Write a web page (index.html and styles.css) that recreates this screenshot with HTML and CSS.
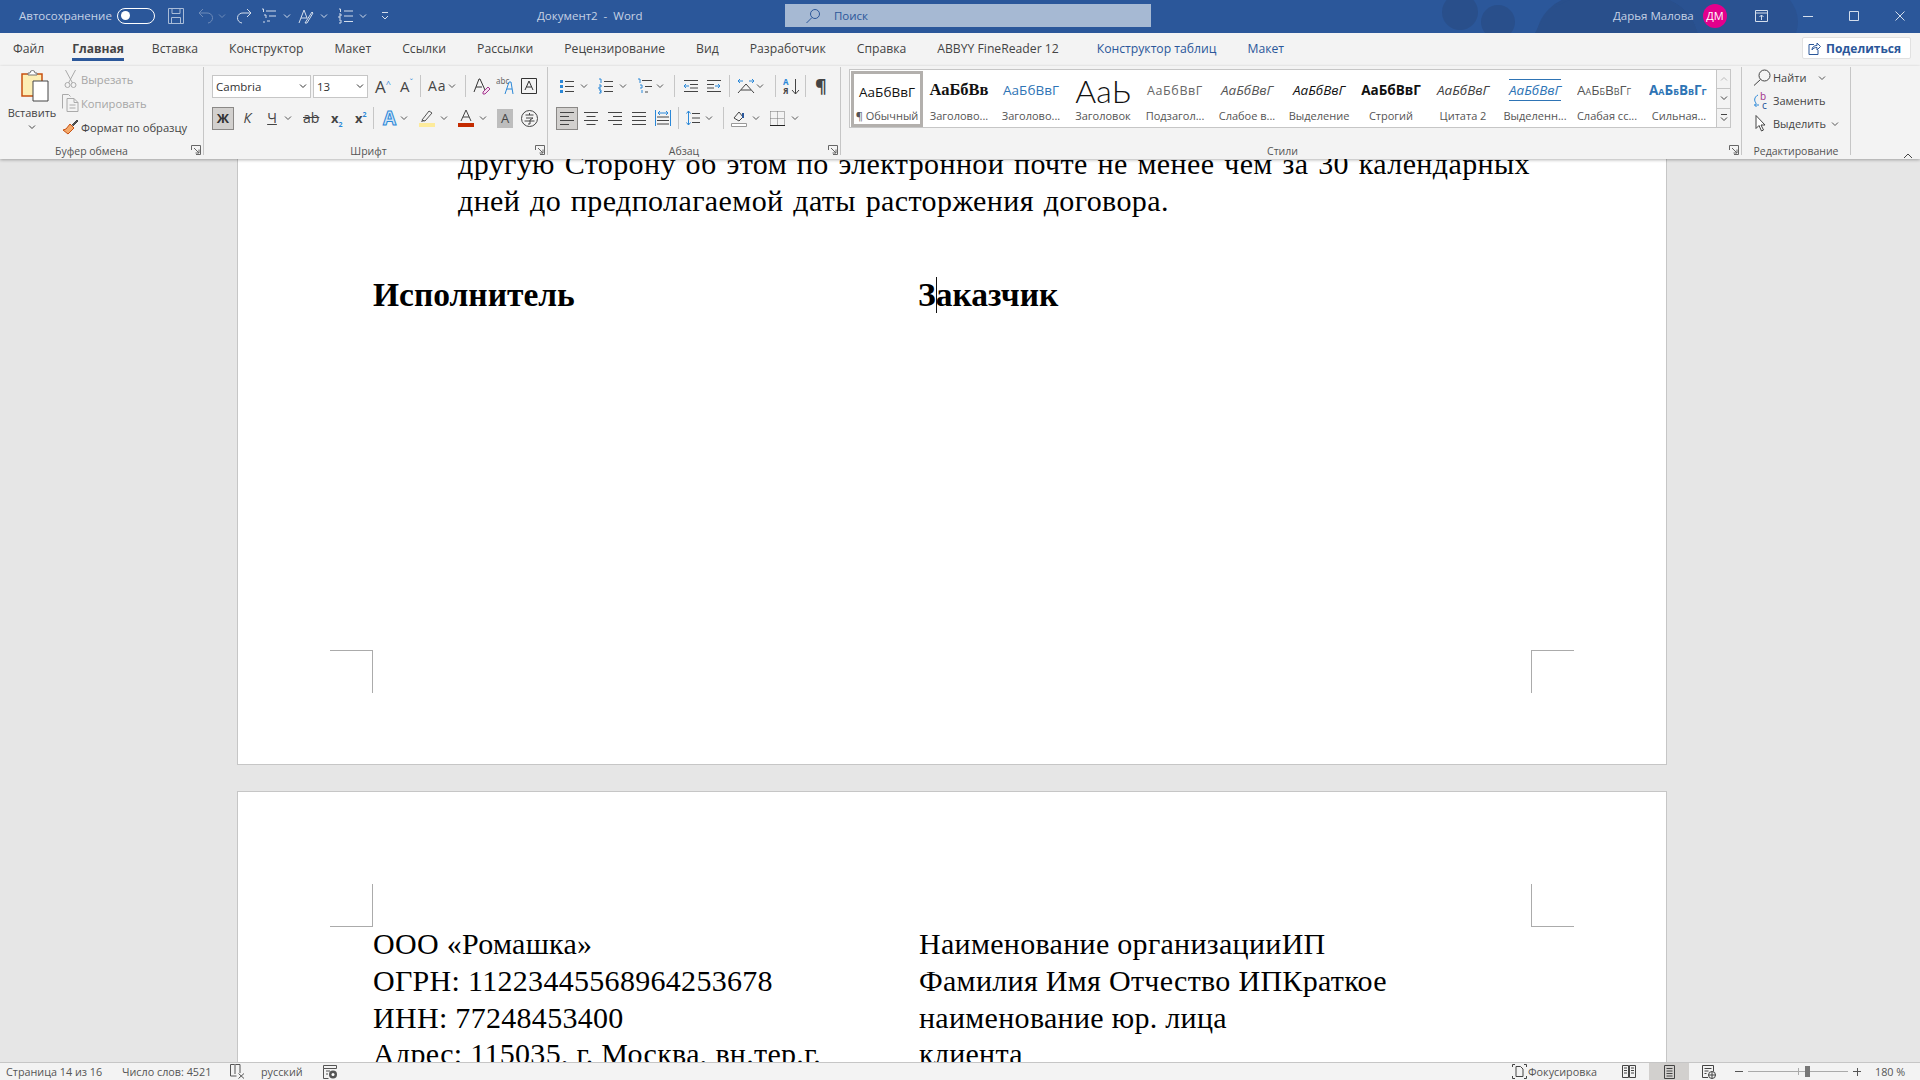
FILE: index.html
```html
<!DOCTYPE html>
<html lang="ru">
<head>
    <meta charset="UTF-8">
    <title>Документ2 - Word</title>
    <link rel="stylesheet" href="styles.css">
</head>
<body>
<svg class="sprite" width="0" height="0">
    <symbol id="chev" viewBox="0 0 8 8"><path d="M1 2.500l3 3 3-3" fill="none" stroke="currentColor"/></symbol>
    <symbol id="launch" viewBox="0 0 10 10"><path d="M.5 5V.5h9v9H5M3 3l5 5M8 4.500V8H4.500" fill="none" stroke="#666"/></symbol>
    <symbol id="bullets" viewBox="0 0 16 16"><path d="M1 2h3v3H1zM1 7h3v3H1zM1 12h3v3H1z" fill="#2b88d8"/><path d="M6 3.500h9M6 8.500h9M6 13.500h9" stroke="#444"/></symbol>
    <symbol id="numbers" viewBox="0 0 16 16"><path d="M1 1h2v4M1 7h2v2H1v2h2M1 12h2v3H1M2 13.500h1" fill="none" stroke="#2b88d8"/><path d="M6 3.500h9M6 8.500h9M6 13.500h9" stroke="#444"/></symbol>
    <symbol id="multi" viewBox="0 0 16 16"><path d="M1 1h2v4M3 7h2v3H3M5 12v3" fill="none" stroke="#2b88d8"/><path d="M5 2.500h10M8 8.500h7M8 14h3" stroke="#444"/></symbol>
    <symbol id="al-left" viewBox="0 0 16 16"><path d="M1 2.500h14M1 6.500h9M1 10.500h14M1 14.500h9" stroke="#444"/></symbol>
    <symbol id="al-center" viewBox="0 0 16 16"><path d="M1 2.500h14M3.500 6.500h9M1 10.500h14M3.500 14.500h9" stroke="#444"/></symbol>
    <symbol id="al-right" viewBox="0 0 16 16"><path d="M1 2.500h14M6 6.500h9M1 10.500h14M6 14.500h9" stroke="#444"/></symbol>
    <symbol id="al-just" viewBox="0 0 16 16"><path d="M1 2.500h14M1 6.500h14M1 10.500h14M1 14.500h14" stroke="#444"/></symbol>
</svg>

<!-- Title bar -->
<header class="titlebar">
    <svg class="title-pattern" width="400" height="33" viewBox="0 0 400 33"><g fill="#294f8b"><circle cx="30" cy="12" r="18"/><circle cx="68" cy="22" r="17"/><circle cx="150" cy="40" r="44"/><path d="M105 33Q118 6 140 0H240Q262 10 268 33z"/></g><path d="M240 0H360Q372 16 366 33H268Q262 10 240 0z" fill="#2a5291"/></svg>
    <div class="qat">
        <span class="qat-label">Автосохранение</span>
        <span class="toggle"><i></i></span>
        <svg class="qat-save" width="16" height="16" viewBox="0 0 16 16"><path d="M.5.500h15v15H.5zM4 .500v5h8v-5M3.500 15.500V9.500h9v6" fill="none" stroke="#a9bcd8"/></svg>
        <svg class="qat-undo" width="15" height="16" viewBox="0 0 15 16"><path d="M5 1L1 5l4 4M1 5h8a5 5 0 0 1 1 10" fill="none" stroke="#6f8cb9"/></svg>
        <svg class="qat-chev dim" width="8" height="8"><use href="#chev"/></svg>
        <svg class="qat-redo" width="15" height="16" viewBox="0 0 15 16"><path d="M10 1l4 4-4 4M14 5H6a5 5 0 0 0-1 10" fill="none" stroke="#d4deec"/></svg>
        <svg class="qat-list1" width="16" height="16" viewBox="0 0 16 16"><path d="M1 1h1.500v3M5 3h10M3 7h2v3M8 8h7M6 13h3M3 13v2" fill="none" stroke="#d4deec"/></svg>
        <svg class="qat-chev ch-1" width="8" height="8"><use href="#chev"/></svg>
        <svg class="qat-pen" width="16" height="16" viewBox="0 0 16 16"><path d="M1 15L6 2l3 8M3 10h6M7 15l7-11 1 1-6 10z" fill="none" stroke="#d4deec"/></svg>
        <svg class="qat-chev ch-1" width="8" height="8"><use href="#chev"/></svg>
        <svg class="qat-list2" width="16" height="16" viewBox="0 0 16 16"><path d="M1 1h1.500v3M1 6h2v2H1v2h2M1 12h2v3H1M6 3h9M6 8h9M6 13.500h9" fill="none" stroke="#d4deec"/></svg>
        <svg class="qat-chev" width="8" height="8"><use href="#chev"/></svg>
        <svg class="qat-custom" width="8" height="10" viewBox="0 0 8 10"><path d="M1 1.500h6M1 5l3 3 3-3" fill="none" stroke="#d4deec"/></svg>
    </div>
    <div class="doc-name">Документ2&nbsp; -&nbsp; Word</div>
    <div class="search">
        <svg width="16" height="16" viewBox="0 0 16 16"><circle cx="10" cy="6" r="4.500" fill="none" stroke="#2b579a"/><path d="M7 9.500L1.500 15" stroke="#2b579a"/></svg>
        <span>Поиск</span>
    </div>
    <div class="account">
        <span class="user-name">Дарья Малова</span>
        <span class="avatar">ДМ</span>
        <svg class="win-ribbon" width="13" height="12" viewBox="0 0 13 12"><path d="M.5.500h12v11H.5zM.5 3h12M6.500 10V5M4.500 7l2-2 2 2" fill="none" stroke="#d4deec"/></svg>
        <svg class="win-btn" width="12" height="12" viewBox="0 0 12 12"><path d="M1 6.500h10" stroke="#d4deec"/></svg>
        <svg class="win-btn" width="12" height="12" viewBox="0 0 12 12"><path d="M1.500 1.500h9v9h-9z" fill="none" stroke="#d4deec"/></svg>
        <svg class="win-btn" width="12" height="12" viewBox="0 0 12 12"><path d="M1.500 1.500l9 9M10.500 1.500l-9 9" stroke="#d4deec"/></svg>
    </div>
</header>

<!-- Tabs -->
<nav class="tabs">
    <span class="tab">Файл</span>
    <span class="tab active">Главная</span>
    <span class="tab">Вставка</span>
    <span class="tab">Конструктор</span>
    <span class="tab">Макет</span>
    <span class="tab">Ссылки</span>
    <span class="tab">Рассылки</span>
    <span class="tab">Рецензирование</span>
    <span class="tab">Вид</span>
    <span class="tab">Разработчик</span>
    <span class="tab">Справка</span>
    <span class="tab">ABBYY FineReader 12</span>
    <span class="tab context context-first">Конструктор таблиц</span>
    <span class="tab context">Макет</span>
    <button class="share">
        <svg width="13" height="13" viewBox="0 0 13 13"><path d="M6 2.500H1v10h9V8M4 8c0-3 2-4.500 5-4.500V1l3.500 3.500L9 8V5.500C7 5.500 5 6 4 8z" fill="none" stroke="#2b579a"/></svg>
        Поделиться
    </button>
</nav>

<!-- Ribbon -->
<section class="ribbon">
    <div class="group group-clip">
        <div class="clip-body">
            <div class="paste">
                <svg width="28" height="32" viewBox="0 0 28 32"><path d="M1 4h20v22H1z" fill="#fdeeb4" stroke="#c8500f" stroke-width="1.500"/><path d="M7 5V3h2a2.500 2.500 0 0 1 5 0h2v2z" fill="#fff" stroke="#777"/><path d="M12 11h15v20H12z" fill="#fff" stroke="#444"/></svg>
                <span>Вставить</span>
                <svg class="c-ic" width="8" height="8"><use href="#chev"/></svg>
            </div>
            <div class="clip-list">
                <div class="clip-item off"><svg width="14" height="20" viewBox="0 0 14 20"><path d="M2 1l7 13M12 1L5 14" stroke="#aaa" fill="none"/><circle cx="4" cy="16" r="2.500" fill="none" stroke="#aaa"/><circle cx="10" cy="16" r="2.500" fill="none" stroke="#aaa"/></svg>Вырезать</div>
                <div class="clip-item off"><svg width="17" height="18" viewBox="0 0 17 18"><path d="M.5 14.500V.5h6l2 2M5 4.500h7l4 4v9H5zM12 4.500v4h4M7.500 11h6M7.500 14h6" stroke="#aaa" fill="none"/></svg>Копировать</div>
                <div class="clip-item"><svg width="17" height="16" viewBox="0 0 17 16"><path d="M8 5l4 4-6 6-5-4 3-1z" fill="#f3a96b" stroke="#c8500f"/><path d="M10 6l5-5 1 1-5 5" fill="#555" stroke="#444"/></svg>Формат по образцу</div>
            </div>
        </div>
        <div class="group-label">Буфер обмена<svg class="launcher" width="10" height="10"><use href="#launch"/></svg></div>
    </div>

    <div class="group group-font">
        <div class="tool-row">
            <span class="combo combo-name">Cambria<svg width="8" height="8"><use href="#chev"/></svg></span>
            <span class="combo combo-size">13<svg width="8" height="8"><use href="#chev"/></svg></span>
            <span class="ic ic-big ml-6">A<sup class="blue">^</sup></span>
            <span class="ic ic-mid ml-7">A<sup class="blue">ˇ</sup></span>
            <i class="sep ml-6"></i>
            <span class="ic ic-aa">Aa</span>
            <svg class="cv ml-2" width="8" height="8"><use href="#chev"/></svg>
            <i class="sep ml-9"></i>
            <svg width="18" height="18" viewBox="0 0 18 18"><path d="M1 15L6 2h1l5 11M3 10h6" fill="none" stroke="#333"/><path d="M10 15l5-5 2 2-5 5h-2z" fill="#f6dff0" stroke="#a3378e"/></svg>
            <svg class="ml-5" width="19" height="18" viewBox="0 0 19 18"><text x="0" y="7" font-size="8" fill="#666" font-family="Noto Sans">abc</text><path d="M9 17l4-12h2l2 12M11 12h5" fill="none" stroke="#2b88d8"/></svg>
            <svg class="ml-6" width="16" height="16" viewBox="0 0 16 16"><path d="M.5.500h15v15H.5zM4 12L8 3l4 9M5.500 9h5" fill="none" stroke="#333"/></svg>
        </div>
        <div class="tool-row row2">
            <span class="ic-btn on bold">Ж</span>
            <span class="ic ic-ital">К</span>
            <span class="ic ic-und">Ч</span>
            <svg class="cv ml-7" width="8" height="8"><use href="#chev"/></svg>
            <span class="ic ic-strike">ab</span>
            <span class="ic ic-sub">x<sub>2</sub></span>
            <span class="ic ic-sup">x<sup>2</sup></span>
            <i class="sep"></i>
            <span class="ic ic-effect">A</span>
            <svg class="cv" width="8" height="8"><use href="#chev"/></svg>
            <svg class="ml-11" width="16" height="18" viewBox="0 0 16 18"><path d="M3 11l7-9 3 2-7 8z" fill="none" stroke="#555"/><path d="M3 11l3 1-4 1z" fill="#555"/><path d="M0 14h16v4H0z" fill="#fdeb9b"/></svg>
            <svg class="cv ml-5" width="8" height="8"><use href="#chev"/></svg>
            <svg class="ml-10" width="16" height="18" viewBox="0 0 16 18"><path d="M3 12L8 1l5 11M5 8h6" fill="none" stroke="#444"/><path d="M0 14h16v4H0z" fill="#c42b00"/></svg>
            <svg class="cv ml-5" width="8" height="8"><use href="#chev"/></svg>
            <span class="ic-shade">A</span>
            <svg class="ml-8" width="17" height="17" viewBox="0 0 17 17"><circle cx="8.500" cy="8.500" r="8" fill="none" stroke="#444"/><path d="M4.500 5h8M8.500 3v2M5 8h7l-3 2v4H7M3.500 11h10" fill="none" stroke="#444"/></svg>
        </div>
        <div class="group-label">Шрифт<svg class="launcher" width="10" height="10"><use href="#launch"/></svg></div>
    </div>

    <div class="group group-para">
        <div class="tool-row">
            <svg class="ml-11" width="16" height="16"><use href="#bullets"/></svg>
            <svg class="cv ml-5" width="8" height="8"><use href="#chev"/></svg>
            <svg class="ml-10" width="16" height="16"><use href="#numbers"/></svg>
            <svg class="cv ml-5" width="8" height="8"><use href="#chev"/></svg>
            <svg class="ml-10" width="16" height="16"><use href="#multi"/></svg>
            <svg class="cv" width="8" height="8"><use href="#chev"/></svg>
            <i class="sep ml-10"></i>
            <svg class="ml-1" width="15" height="14" viewBox="0 0 15 14"><path d="M1 1.500h14M7 5.500h8M7 9h8M1 12.500h14" stroke="#444"/><path d="M6 7H1M3 5L1 7l2 2" fill="none" stroke="#2b88d8"/></svg>
            <svg class="ml-9" width="15" height="14" viewBox="0 0 15 14"><path d="M0 1.500h14M0 5.500h7M0 9h7M0 12.500h14" stroke="#444"/><path d="M8 7h5M11 5l2 2-2 2" fill="none" stroke="#2b88d8"/></svg>
            <i class="sep"></i>
            <svg width="18" height="16" viewBox="0 0 18 16"><path d="M1 15L9 6l8 9M4 12h10" fill="none" stroke="#444"/><path d="M1 3h5M3 1L1 3l2 2M17 3h-5M15 1l2 2-2 2" fill="none" stroke="#2b88d8"/></svg>
            <svg class="cv ml-1" width="8" height="8"><use href="#chev"/></svg>
            <i class="sep ml-11"></i>
            <svg width="17" height="17" viewBox="0 0 17 17"><text x="0" y="7" font-size="8" font-weight="700" fill="#2b88d8" font-family="Noto Sans">A</text><text x="0" y="16" font-size="8" font-weight="700" fill="#444" font-family="Noto Sans">Я</text><path d="M12.500 1v15M9 12l3.500 4 3.500-4" fill="none" stroke="#444"/></svg>
            <i class="sep ml-5"></i>
            <span class="ic ic-pil ml-2">¶</span>
        </div>
        <div class="tool-row row2">
            <span class="ic-btn on ml-8"><svg width="16" height="16"><use href="#al-left"/></svg></span>
            <svg class="ml-5" width="16" height="16"><use href="#al-center"/></svg>
            <svg class="ml-8" width="16" height="16"><use href="#al-right"/></svg>
            <svg class="ml-8" width="16" height="16"><use href="#al-just"/></svg>
            <svg class="ml-8" width="16" height="16" viewBox="0 0 16 16"><path d="M.5 0v16M15.500 0v16" stroke="#2b88d8"/><path d="M3 3h10M5 1L3 3l2 2M11 1l2 2-2 2" fill="none" stroke="#2b88d8"/><path d="M2 7h12M2 10.500h12M2 14h12" stroke="#444"/></svg>
            <i class="sep"></i>
            <svg width="14" height="16" viewBox="0 0 14 16"><path d="M6 3.500h8M6 8h8M6 12.500h8" stroke="#444"/><path d="M2.500 1v14M.5 3.500l2-2.500 2 2.500M.5 12.500l2 2.500 2-2.500" fill="none" stroke="#2b88d8"/></svg>
            <svg class="cv ml-5" width="8" height="8"><use href="#chev"/></svg>
            <i class="sep ml-10"></i>
            <svg width="16" height="17" viewBox="0 0 16 17"><path d="M3 8l5-6 4 5-4 4z" fill="none" stroke="#444"/><path d="M12 3v5" stroke="#2b579a" stroke-width="2"/><path d="M.5 13.500h15v3H.5z" fill="#fff" stroke="#999"/></svg>
            <svg class="cv ml-5" width="8" height="8"><use href="#chev"/></svg>
            <svg class="ml-10" width="15" height="15" viewBox="0 0 15 15"><path d="M.5.500h14M.5 7.500h14M7.500.5v14M.5.500v14M14.500.5v14" fill="none" stroke="#777" stroke-dasharray="1 1"/><path d="M0 14.500h15" stroke="#222"/></svg>
            <svg class="cv ml-6" width="8" height="8"><use href="#chev"/></svg>
        </div>
        <div class="group-label">Абзац<svg class="launcher" width="10" height="10"><use href="#launch"/></svg></div>
    </div>

    <div class="group group-styles">
        <div class="gallery">
            <div class="gallery-items">
                <div class="style-item selected"><span class="sample">АаБбВвГ</span><span class="style-name">¶ Обычный</span></div>
                <div class="style-item"><span class="sample s-h1">АаБбВв</span><span class="style-name">Заголово...</span></div>
                <div class="style-item"><span class="sample s-h2">АаБбВвГ</span><span class="style-name">Заголово...</span></div>
                <div class="style-item"><span class="sample s-title">АаЬ</span><span class="style-name">Заголовок</span></div>
                <div class="style-item"><span class="sample s-sub">АаБбВвГ</span><span class="style-name">Подзагол...</span></div>
                <div class="style-item"><span class="sample s-em">АаБбВвГ</span><span class="style-name">Слабое в...</span></div>
                <div class="style-item"><span class="sample s-em s-dark">АаБбВвГ</span><span class="style-name">Выделение</span></div>
                <div class="style-item"><span class="sample s-strong">АаБбВвГ</span><span class="style-name">Строгий</span></div>
                <div class="style-item"><span class="sample s-em s-quote">АаБбВвГ</span><span class="style-name">Цитата 2</span></div>
                <div class="style-item"><span class="sample s-em s-blue">АаБбВвГ</span><span class="style-name">Выделенн...</span></div>
                <div class="style-item"><span class="sample s-caps">АаБбВвГг</span><span class="style-name">Слабая сс...</span></div>
                <div class="style-item"><span class="sample s-caps s-capsb">АаБбВвГг</span><span class="style-name">Сильная...</span></div>
            </div>
            <div class="gallery-scroll">
                <span class="dim-up"><svg width="8" height="8"><use href="#chev"/></svg></span>
                <span><svg width="8" height="8"><use href="#chev"/></svg></span>
                <span class="more"><svg width="8" height="9" viewBox="0 0 8 9"><path d="M1 1.500h6M1 4.500l3 3 3-3" fill="none" stroke="#444"/></svg></span>
            </div>
        </div>
        <div class="group-label">Стили<svg class="launcher" width="10" height="10"><use href="#launch"/></svg></div>
    </div>

    <div class="group group-edit">
        <div class="edit-list">
            <div class="edit-item"><svg width="18" height="17" viewBox="0 0 18 17"><circle cx="11.500" cy="6.500" r="5.500" fill="none" stroke="#444"/><path d="M7.500 10.500L1 16.500" stroke="#444"/></svg>Найти<svg class="cv ml-10" width="8" height="8"><use href="#chev"/></svg></div>
            <div class="edit-item"><svg width="18" height="17" viewBox="0 0 18 17"><text x="7" y="8" font-size="10" fill="#a3378e" font-family="Noto Sans">b</text><text x="9" y="17" font-size="10" fill="#2b579a" font-family="Noto Sans">c</text><path d="M5 3C1 5 1 9 3 11M6 13H1.500M3.500 11l-2 2 2 2" fill="none" stroke="#2b88d8"/></svg>Заменить</div>
            <div class="edit-item"><svg width="18" height="17" viewBox="0 0 18 17"><path d="M3 .5v13l3-3 2.500 5.500 2-1-2.500-5h4z" fill="#fff" stroke="#444"/></svg>Выделить<svg class="cv" width="8" height="8"><use href="#chev"/></svg></div>
        </div>
        <div class="group-label">Редактирование</div>
    </div>
    <svg class="collapse" width="10" height="8" viewBox="0 0 10 8"><path d="M1 6l4-4 4 4" fill="none" stroke="#444"/></svg>
</section>

<!-- Document -->
<main class="doc">
    <article class="page page-one">
        <p class="clause">другую Сторону об этом по электронной почте не менее чем за 30 календарных<br>дней до предполагаемой даты расторжения договора.</p>
        <div class="columns signers">
            <div><b>Исполнитель</b></div>
            <div class="caret-cell"><b>Заказчик</b><i class="caret"></i></div>
        </div>
        <i class="mark mark-bl"></i>
        <i class="mark mark-br"></i>
    </article>
    <article class="page page-two">
        <i class="mark mark-tl"></i>
        <i class="mark mark-tr"></i>
        <div class="columns details">
            <div>ООО «Ромашка»<br>ОГРН: 11223445568964253678<br>ИНН: 77248453400<br>Адрес: 115035, г. Москва, вн.тер.г.</div>
            <div>Наименование организацииИП<br>Фамилия Имя Отчество ИПКраткое<br>наименование юр. лица<br>клиента</div>
        </div>
    </article>
</main>

<!-- Status bar -->
<footer class="statusbar">
    <span class="st-page">Страница 14 из 16</span>
    <span class="st-words">Число слов: 4521</span>
    <svg class="st-proof" width="15" height="15" viewBox="0 0 15 15"><path d="M10 9V.5H5.500L5 1 4.500.5H.5V12h6" fill="none" stroke="#555"/><path d="M5 1v9M8.500 9.500l5.500 5M14 9.500l-5.500 5" fill="none" stroke="#555"/></svg>
    <span class="st-lang">русский</span>
    <svg class="st-macro" width="15" height="14" viewBox="0 0 15 14"><path d="M.5.500h13v3H.5zM.5 3.500v10h5M3 6h4M3 9h2" fill="none" stroke="#555"/><circle cx="10" cy="9.500" r="4" fill="#555"/><circle cx="10" cy="9.500" r="1.500" fill="#fff"/></svg>
    <span class="st-right">
        <svg class="st-focus" width="15" height="15" viewBox="0 0 15 15"><path d="M.5 3V.5H3M12 .5h2.500V3M.5 12v2.500H3M12 14.500h2.500V12M4 12.500v-10h4.500L11 5v7.500z" fill="none" stroke="#444"/></svg>
        <span>Фокусировка</span>
        <svg class="st-read" width="14" height="13" viewBox="0 0 14 13"><path d="M.5.500h6v12h-6zM7.500.5h6v12h-6zM2 3h3M2 5.500h3M2 8h3M9 3h3M9 5.500h3M9 8h3" fill="none" stroke="#444"/></svg>
        <span class="st-print"><svg width="11" height="14" viewBox="0 0 11 14"><path d="M.5.500h10v13H.5zM2.500 3.500h6M2.500 6h6M2.500 8.500h6M2.500 11h6" fill="none" stroke="#444"/></svg></span>
        <svg class="st-web" width="14" height="14" viewBox="0 0 14 14"><path d="M6 12.500H.5V.5h11v6M2.500 3.500h7M2.500 6h4M2.500 8.500h2" fill="none" stroke="#444"/><circle cx="10" cy="10" r="3.500" fill="none" stroke="#444"/><path d="M6.500 10h7M10 6.500v7" stroke="#444"/></svg>
        <span class="zoom-minus"></span>
        <span class="slider"><i class="tick"></i><i class="thumb"></i></span>
        <span class="zoom-plus"></span>
        <span class="st-zoom">180 %</span>
    </span>
</footer>
</body>
</html>
```

FILE: styles.css
```css
* {
    box-sizing: border-box;
}

html, body {
    margin: 0;
    height: 100%;
    overflow: hidden;
}

body {
    display: flex;
    flex-direction: column;
    width: 1920px;
    height: 1080px;
    font-family: "Open Sans", "Noto Sans", sans-serif;
    font-size: 11px;
    color: #444;
    background: #e6e6e6;
}

svg {
    flex: none;
    display: block;
}

.sprite {
    position: absolute;
}

/* Title bar */
.titlebar {
    position: relative;
    flex: none;
    display: flex;
    align-items: center;
    height: 33px;
    padding-bottom: 2px;
    background: #2b579a;
    color: #d4deec;
    overflow: hidden;
}

.title-pattern {
    position: absolute;
    left: 1430px;
    top: 0;
}

.qat {
    position: relative;
    display: flex;
    align-items: center;
    padding-left: 19px;
    width: 537px;
    color: #d4deec;
}

.qat-label {
    width: 98px;
    font-size: 11.500px;
    color: #c5d2e6;
}

.toggle {
    width: 38px;
    height: 16px;
    border: 1.500px solid #fff;
    border-radius: 8px;
    padding: 2px 3px;
}

.toggle i {
    display: block;
    width: 9px;
    height: 9px;
    background: #fff;
    border-radius: 50%;
}

.qat-save { margin-left: 13px; }
.qat-undo { margin-left: 14px; }
.qat-chev { margin-left: 5px; }
.qat-chev.ch-1 { margin-left: 6px; }
.qat-chev.dim { color: #6f8cb9; }
.qat-redo { margin-left: 11px; }
.qat-list1 { margin-left: 9px; }
.qat-pen { margin-left: 7px; }
.qat-list2 { margin-left: 10px; }
.qat-custom { margin-left: 14px; }

.doc-name {
    position: relative;
    width: 248px;
    font-size: 11.500px;
    color: #c6d2e4;
}

.search {
    position: relative;
    display: flex;
    align-items: center;
    gap: 13px;
    width: 366px;
    height: 23px;
    padding-left: 20px;
    background: #a6b9d3;
    color: #2b579a;
    font-size: 11.500px;
}

.account {
    position: relative;
    display: flex;
    align-items: center;
    margin-left: 462px;
    flex: 1;
}

.user-name {
    width: 90px;
    font-size: 11.500px;
    color: #c5d2e6;
}

.avatar {
    display: flex;
    align-items: center;
    justify-content: center;
    width: 24px;
    height: 24px;
    border-radius: 50%;
    background: #e3008c;
    color: #fff;
    font-size: 11px;
}

.win-ribbon { margin-left: 28px; }
.win-btn { margin-left: 34px; }

/* Tabs */
.tabs {
    flex: none;
    display: flex;
    align-items: flex-start;
    gap: 31px;
    height: 33px;
    padding-left: 13px;
    background: #f3f3f3;
    font-size: 12.200px;
    color: #444;
}

.tab {
    height: 28px;
    padding-top: 7px;
}

.tab.active {
    margin-left: -3px;
    margin-right: -3px;
    font-size: 12px;
    font-weight: 700;
    color: #444;
    border-bottom: 3px solid #2b579a;
}

.tab.context {
    color: #2b579a;
}

.tab.context-first {
    margin-left: 7px;
}

.share {
    display: flex;
    align-items: center;
    gap: 5px;
    margin: 4px 9px 0 auto;
    width: 109px;
    height: 22px;
    padding: 0 0 0 5px;
    background: #fff;
    border: 1px solid #e1e1e1;
    border-radius: 2px;
    color: #2b579a;
    font: 700 12px "Open Sans", sans-serif;
}

/* Ribbon */
.ribbon {
    position: relative;
    z-index: 2;
    flex: none;
    display: flex;
    height: 93px;
    padding-top: 1px;
    background: #f3f3f3;
    box-shadow: 0 1px 3px rgba(0, 0, 0, .3);
}

.group {
    position: relative;
    height: 88px;
    border-right: 1px solid #c6c6c6;
}

.group-label {
    position: absolute;
    left: 0;
    right: 0;
    top: 77px;
    text-align: center;
    font-size: 10.500px;
    line-height: 14px;
    color: #555;
}

.launcher {
    position: absolute;
    right: 2px;
    top: 1px;
}

.group-clip { width: 204px; }
.group-font { width: 344px; padding-left: 8px; }
.group-para { width: 293px; }
.group-styles { width: 901px; padding-left: 8px; }
.group-edit { width: 109px; padding-left: 11px; }

.group-clip .group-label { padding-right: 20px; }
.group-font .group-label { padding-right: 14px; }
.group-para .group-label { padding-right: 20px; }
.group-styles .group-label { padding-right: 17px; }

.collapse {
    position: absolute;
    left: 1903px;
    top: 86px;
}

.clip-body {
    display: flex;
    padding-top: 3px;
}

.paste {
    display: flex;
    flex-direction: column;
    align-items: center;
    width: 62px;
    padding-left: 2px;
    font-size: 11px;
}

.paste svg:first-child {
    margin-left: 6px;
}

.paste span {
    margin-top: 3px;
    line-height: 15px;
}

.c-ic {
    margin-top: 3px;
}

.clip-list {
    margin-top: -3px;
}

.clip-item {
    display: flex;
    align-items: center;
    gap: 2px;
    height: 24px;
    font-size: 11.200px;
    color: #444;
}

.clip-item svg {
    width: 17px;
}

.clip-item.off {
    color: #a6a6a6;
}

.tool-row {
    display: flex;
    align-items: center;
    height: 24px;
    margin-top: 7px;
}

.row2 {
    margin-top: 8px;
}

.combo {
    display: flex;
    align-items: center;
    justify-content: space-between;
    height: 23px;
    padding: 0 3px;
    background: #fff;
    border: 1px solid #c6c6c6;
    font-size: 11.500px;
    color: #333;
}

.combo-name { width: 99px; }
.combo-size { width: 55px; margin-left: 2px; }

.ic {
    display: inline-block;
    flex: none;
    color: #444;
    line-height: 1;
    text-align: center;
    white-space: nowrap;
}

.ic-big { width: 18px; font-size: 17px; }
.ic-mid { width: 15px; font-size: 15px; }
.ic sup {
    font-size: 9px;
    vertical-align: 6px;
    line-height: 0;
}
.blue, .ic-sub sub, .ic-sup sup { color: #2b88d8; }
.ic-aa { width: 18px; font-size: 14px; letter-spacing: 1px; }

.sep {
    flex: none;
    width: 1px;
    height: 22px;
    margin: 0 7px;
    background: #c6c6c6;
}

.cv {
    margin-left: 3px;
    color: #555;
}

.ml-1 { margin-left: 1px; }
.ml-2 { margin-left: 2px; }
.ml-5 { margin-left: 5px; }
.ml-6 { margin-left: 6px; }
.ml-7 { margin-left: 7px; }
.ml-8 { margin-left: 8px; }
.ml-9 { margin-left: 9px; }
.ml-10 { margin-left: 10px; }
.ml-11 { margin-left: 11px; }

.ic-btn {
    display: flex;
    align-items: center;
    justify-content: center;
    flex: none;
    width: 22px;
    height: 23px;
}

.ic-btn.on {
    background: #d2d0ce;
    border: 1px solid #8a8886;
}

.ic-btn.bold {
    font-size: 13px;
    font-weight: 700;
    color: #333;
}

.ic-ital { width: 9px; font-size: 14px; font-style: italic; margin-left: 9px; }
.ic-und { width: 10px; font-size: 14px; margin-left: 15px; text-decoration: underline; }
.ic-strike { width: 15px; font-size: 14px; margin-left: 11px; text-decoration: line-through; }
.ic-sub { width: 11px; font-size: 13px; font-weight: 700; margin-left: 13px; }
.ic-sup { width: 11px; font-size: 13px; font-weight: 700; margin-left: 13px; }
.ic-sub sub { font-size: 7px; line-height: 0; }
.ic-sup sup { font-size: 7px; }

.ic-effect {
    width: 15px;
    margin-left: 1px;
    font-size: 19px;
    font-weight: 700;
    color: #cfe4f7;
    -webkit-text-stroke: 1px #2b88d8;
}

.ic-shade {
    display: flex;
    align-items: center;
    justify-content: center;
    flex: none;
    width: 16px;
    height: 19px;
    margin-left: 10px;
    background: #bdbdbd;
    font-size: 13px;
}

.ic-pil { width: 12px; font-size: 18px; font-weight: 700; }

.gallery {
    display: flex;
    width: 882px;
    height: 59px;
    margin-top: 2px;
    background: #fff;
    border: 1px solid #c6c6c6;
}

.gallery-items {
    display: flex;
    width: 867px;
    padding-left: 1px;
}

.style-item {
    display: flex;
    flex-direction: column;
    align-items: center;
    flex: none;
    width: 72px;
    height: 56px;
    margin-top: 1px;
    overflow: hidden;
}

.style-item.selected {
    border: 3px solid #b3b0ad;
}

.sample {
    display: flex;
    align-items: center;
    flex: none;
    height: 38px;
    font-size: 13.500px;
    white-space: nowrap;
    color: #111;
}

.selected .sample {
    height: 35px;
}

.style-name {
    font-size: 11px;
    line-height: 14px;
    color: #555;
    white-space: nowrap;
}

.s-h1 { font-family: "Liberation Serif", serif; font-weight: 700; font-size: 16.500px; color: #111; }
.s-h2 { color: #2e74b5; }
.s-title { font-size: 32px; font-weight: 300; font-family: "Lato", sans-serif; color: #111; }
.s-sub { color: #666; letter-spacing: .6px; font-size: 12.500px; }
.s-em { font-style: italic; color: #555; }
.s-dark { color: #111; }
.s-strong { font-weight: 700; color: #111; }
.s-quote { color: #404040; }
.s-blue { height: 22px; margin: 8px 0; color: #2e74b5; border-top: 1px solid #2e74b5; border-bottom: 1px solid #2e74b5; }
.s-caps { width: 60px; overflow: hidden; color: #555; font-variant: small-caps; font-size: 13.500px; }
.s-capsb { color: #2e74b5; font-weight: 700; }

.gallery-scroll {
    display: flex;
    flex-direction: column;
    width: 14px;
}

.gallery-scroll span {
    display: flex;
    align-items: center;
    justify-content: center;
    flex: 1;
    border-left: 1px solid #c6c6c6;
    border-bottom: 1px solid #c6c6c6;
    background: #f3f3f3;
}

.gallery-scroll .more {
    border-bottom: 0;
}

.dim-up svg {
    transform: rotate(180deg);
    color: #bbb;
}

.edit-list {
    margin-top: -1px;
}

.edit-item {
    display: flex;
    align-items: center;
    gap: 2px;
    height: 23px;
    font-size: 11px;
    color: #444;
}

/* Document */
.doc {
    flex: 1;
    overflow: hidden;
    min-height: 0;
}

.page {
    position: relative;
    width: 1430px;
    margin-left: 237px;
    padding-left: 135px;
    padding-right: 135px;
    background: #fff;
    border: 1px solid #c6c6c6;
    font-family: "Liberation Serif", serif;
    font-size: 30px;
    line-height: 36.800px;
    color: #000;
}

.page-one {
    height: 606px;
    border-top: 0;
    overflow: hidden;
}

.page-two {
    margin-top: 26px;
    height: 400px;
    padding-top: 134px;
}

.clause {
    margin: -13px 0 0 85px;
    letter-spacing: .39px;
    word-spacing: 1.900px;
    white-space: nowrap;
}

.columns {
    display: grid;
}

.signers {
    grid-template-columns: 545px 1fr;
    margin-top: 57px;
    font-size: 33.500px;
}

.details {
    grid-template-columns: 546px 1fr;
    letter-spacing: .3px;
}

.caret-cell {
    position: relative;
}

.caret {
    position: absolute;
    left: 18px;
    top: 0;
    width: 1px;
    height: 36px;
    background: #111;
}

.mark {
    position: absolute;
    width: 43px;
    height: 43px;
    border: 0 solid #ababab;
}

.mark-bl { left: 92px; top: 491px; border-top-width: 1px; border-right-width: 1px; }
.mark-br { left: 1293px; top: 491px; border-top-width: 1px; border-left-width: 1px; }
.mark-tl { left: 92px; top: 92px; border-bottom-width: 1px; border-right-width: 1px; }
.mark-tr { left: 1293px; top: 92px; border-bottom-width: 1px; border-left-width: 1px; }

/* Status bar */
.statusbar {
    position: relative;
    z-index: 2;
    flex: none;
    display: flex;
    align-items: center;
    height: 18px;
    background: #f3f3f3;
    border-top: 1px solid #c6c6c6;
    font-size: 10.800px;
    color: #555;
}

.st-page { margin-left: 6px; width: 116px; }
.st-words { width: 108px; }
.st-proof { margin-right: 16px; }
.st-lang { width: 62px; }

.st-right {
    display: flex;
    align-items: center;
    height: 100%;
    margin-left: auto;
}

.st-focus { margin-right: 1px; }
.st-read { margin-left: 25px; }

.st-print {
    display: flex;
    align-items: center;
    justify-content: center;
    width: 40px;
    height: 100%;
    margin-left: 13px;
    background: #d2d0ce;
}

.st-web { margin-left: 13px; }

.zoom-minus {
    width: 8px;
    height: 1px;
    margin-left: 19px;
    background: #555;
}

.slider {
    position: relative;
    width: 100px;
    height: 1px;
    margin-left: 5px;
    background: #aaa;
}

.tick {
    position: absolute;
    left: 50px;
    top: -3px;
    width: 1px;
    height: 7px;
    background: #aaa;
}

.thumb {
    position: absolute;
    left: 57px;
    top: -5px;
    width: 5px;
    height: 11px;
    background: #777;
}

.zoom-plus {
    position: relative;
    width: 8px;
    height: 1px;
    margin-left: 5px;
    background: #555;
}

.zoom-plus::after {
    content: "";
    position: absolute;
    left: 3.500px;
    top: -3.500px;
    width: 1px;
    height: 8px;
    background: #555;
}

.st-zoom {
    width: 45px;
    margin-left: 14px;
}
```
